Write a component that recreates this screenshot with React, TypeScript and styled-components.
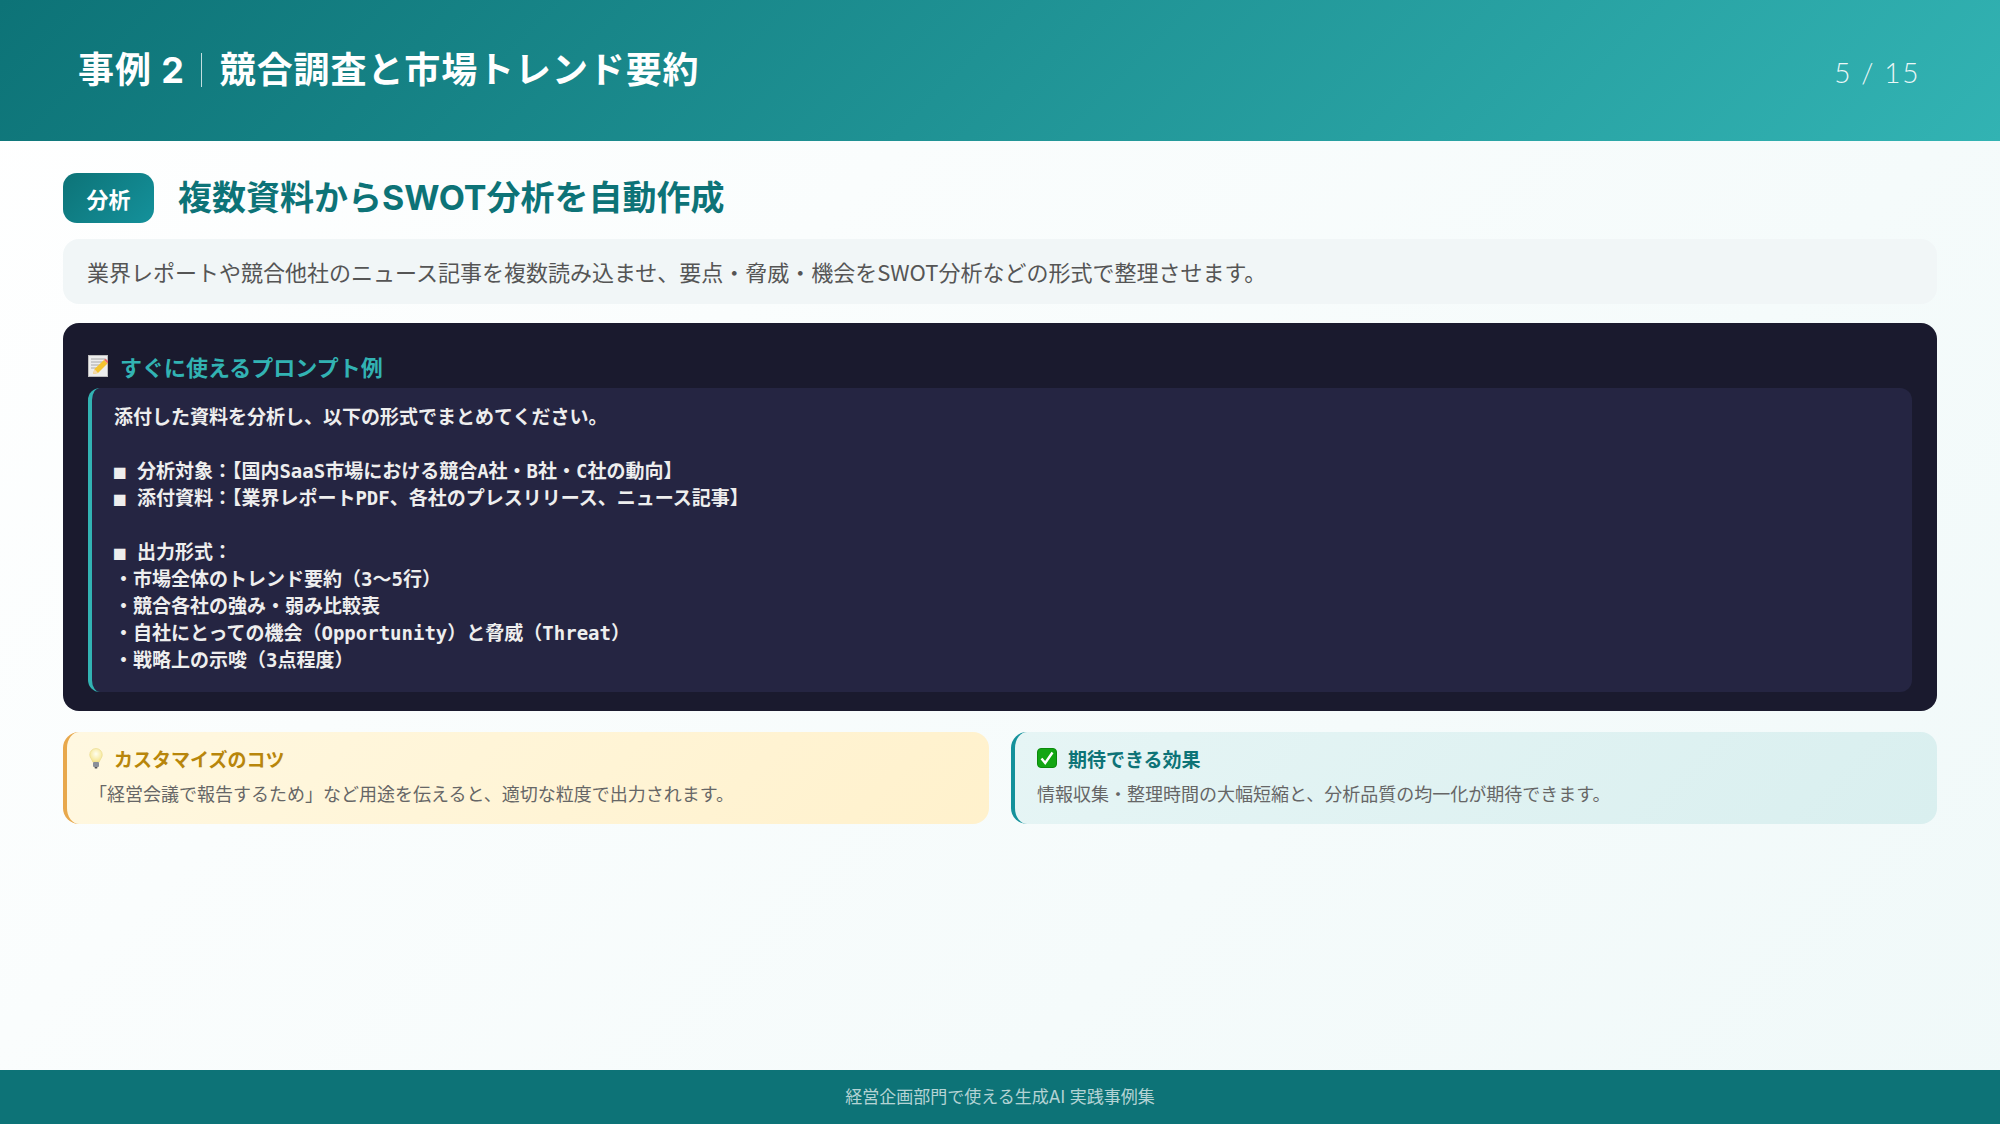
import React from "react";
import styled, { createGlobalStyle } from "styled-components";

const Global = createGlobalStyle`
  html, body { margin: 0; padding: 0; }
  body { font-family: "Noto Sans CJK JP", "Noto Sans", sans-serif; }
`;
const JP = `"Noto Sans CJK JP", "Noto Sans", sans-serif`;

const Page = styled.div`
  width: 2000px; height: 1124px; display: flex; flex-direction: column; overflow: hidden;
  background: linear-gradient(135deg, #ffffff 0%, #f0f9f9 100%);
`;
const Header = styled.header`
  height: 141px; flex: none; box-sizing: border-box; padding: 0 78px; display: flex; align-items: center; justify-content: space-between;
  background: linear-gradient(135deg, #0d7377 0%, #32b3b3 100%);
  color: #fff;
`;
const HeaderTitle = styled.h1`
  margin: 0; font: 700 36px/1.4 "Inter", ${JP}; letter-spacing: 0.9px; display: flex; align-items: center;
`;
const Divider = styled.span`
  display: inline-block; width: 1px; height: 34px; background: rgba(255,255,255,0.75); margin: 0 18px 0 16px;
`;
const PageNo = styled.div`
  font: 300 28px/1 "Lato", sans-serif; letter-spacing: 1.6px; color: rgba(255,255,255,0.92); margin-top: 2px; margin-right: 2px;
`;
const Main = styled.main`
  flex: 1; box-sizing: border-box; padding: 32px 63px 0; display: flex; flex-direction: column;
`;
const TitleRow = styled.div`
  display: flex; align-items: center; gap: 24px; height: 50px; margin-bottom: 16px;
`;
const Tag = styled.span`
  width: 91px; height: 50px; border-radius: 14px; display: flex; align-items: center; justify-content: center;
  background: linear-gradient(135deg, #0d7377, #14919b); color: #fff; font: 700 22px/1 ${JP};
`;
const Title = styled.h2`
  margin: 0; font: 700 34px/1.3 "Inter", ${JP}; color: #0d7377;
`;
const Desc = styled.p`
  margin: 0 0 19px; height: 65px; box-sizing: border-box; padding: 0 24px; display: flex; align-items: center; border-radius: 16px;
  background: #f1f6f7; color: #555; font: 400 22px/1.5 ${JP};
`;
const PromptCard = styled.section`
  height: 388px; box-sizing: border-box; background: #1a1a2e; border-radius: 16px; padding: 20px 25px 19px; display: flex; flex-direction: column;
  margin-bottom: 21px;
`;
const PromptHead = styled.div`
  display: flex; align-items: center; gap: 12px; height: 45px; color: #32b3b3; font: 700 22px/1 ${JP};
`;
const PromptBody = styled.pre`
  flex: 1; margin: 0; box-sizing: border-box; padding: 16px 22px; background: #252542; border-left: 4px solid #32b3b3; border-radius: 12px;
  color: #eeeeee; font: 700 19px/27px "DejaVu Sans Mono", "Noto Sans CJK JP", monospace; white-space: pre-wrap; overflow: hidden;
`;
const Cards = styled.div`
  display: grid; grid-template-columns: 1fr 1fr; gap: 22px;
`;
const Card = styled.div<{ $accent: string; $bg: string }>`
  height: 92px; box-sizing: border-box; padding: 12px 24px 0 22px; border-radius: 16px; border-left: 4px solid ${p => p.$accent}; background: ${p => p.$bg};
`;
const CardHead = styled.div<{ $color: string }>`
  display: flex; align-items: center; gap: 11px; height: 28px; color: ${p => p.$color}; font: 700 19px/1 ${JP};
`;
const CardText = styled.p`
  margin: 8px 0 0; color: #666; font: 400 18px/1.5 ${JP};
`;
const Footer = styled.footer`
  height: 54px; flex: none; display: flex; align-items: center; justify-content: center; background: #0d7377; color: rgba(255,255,255,0.7);
  font: 400 17px/1 "Inter", ${JP};
`;

const MemoIcon = () => (
  <svg width="20" height="22" viewBox="0 0 20 22">
    <rect x="0.5" y="0.5" width="19" height="21" fill="#ededed" stroke="#bdbdbd" />
    <path d="M3 4h14M3 7h14M3 10h9M3 13h6" stroke="#a8a8a8" strokeWidth="1" />
    <path d="M5 19l1.5-5L16 5l3.500 3.500L10 18z" fill="#f4c430" />
    <path d="M16 5l1.500-1.500 3 3L19.500 8.500z" fill="#e8706a" />
    <path d="M5 19l1.500-5 3.500 4z" fill="#f3d9b0" />
  </svg>
);
const BulbIcon = () => (
  <svg width="14" height="21" viewBox="0 0 14 21">
    <defs>
      <radialGradient id="b" cx="50%" cy="40%" r="60%">
        <stop offset="0" stopColor="#fffef0" />
        <stop offset="1" stopColor="#f6e58d" />
      </radialGradient>
    </defs>
    <path d="M7 .5a6.300 6.300 0 0 1 6.300 6.300c0 2.800-2.300 4.400-3 7.200H3.700c-.7-2.800-3-4.400-3-7.200A6.300 6.300 0 0 1 7 .5z" fill="url(#b)" stroke="#e8d88a" strokeWidth=".6" />
    <rect x="4" y="14" width="6" height="5" rx="1" fill="#8a8f98" />
    <rect x="5.500" y="19" width="3" height="1.500" rx=".7" fill="#555" />
  </svg>
);
const CheckIcon = () => (
  <svg width="20" height="20" viewBox="0 0 20 20">
    <rect x="0.500" y="0.500" width="19" height="19" rx="3.500" fill="#13a613" stroke="#0c8a0c" />
    <path d="M4.500 10.500l3.700 4.500 7.300-10.500" fill="none" stroke="#fff" strokeWidth="2.400" />
  </svg>
);

const prompt = `添付した資料を分析し、以下の形式でまとめてください。

■ 分析対象：【国内SaaS市場における競合A社・B社・C社の動向】
■ 添付資料：【業界レポートPDF、各社のプレスリリース、ニュース記事】

■ 出力形式：
・市場全体のトレンド要約（3〜5行）
・競合各社の強み・弱み比較表
・自社にとっての機会（Opportunity）と脅威（Threat）
・戦略上の示唆（3点程度）`;

export default function App() {
  return (
    <Page>
      <Global />
      <Header>
        <HeaderTitle>事例 2<Divider />競合調査と市場トレンド要約</HeaderTitle>
        <PageNo>5 / 15</PageNo>
      </Header>
      <Main>
        <TitleRow>
          <Tag>分析</Tag>
          <Title>複数資料からSWOT分析を自動作成</Title>
        </TitleRow>
        <Desc>業界レポートや競合他社のニュース記事を複数読み込ませ、要点・脅威・機会をSWOT分析などの形式で整理させます。</Desc>
        <PromptCard>
          <PromptHead><MemoIcon />すぐに使えるプロンプト例</PromptHead>
          <PromptBody>{prompt}</PromptBody>
        </PromptCard>
        <Cards>
          <Card $accent="#e8a84c" $bg="linear-gradient(135deg, #fff8e1, #fff1cc)">
            <CardHead $color="#b8860b"><BulbIcon />カスタマイズのコツ</CardHead>
            <CardText>「経営会議で報告するため」など用途を伝えると、適切な粒度で出力されます。</CardText>
          </Card>
          <Card $accent="#14919b" $bg="linear-gradient(135deg, #e6f5f5, #d9efef)">
            <CardHead $color="#0d7377"><CheckIcon />期待できる効果</CardHead>
            <CardText>情報収集・整理時間の大幅短縮と、分析品質の均一化が期待できます。</CardText>
          </Card>
        </Cards>
      </Main>
      <Footer>経営企画部門で使える生成AI 実践事例集</Footer>
    </Page>
  );
}
